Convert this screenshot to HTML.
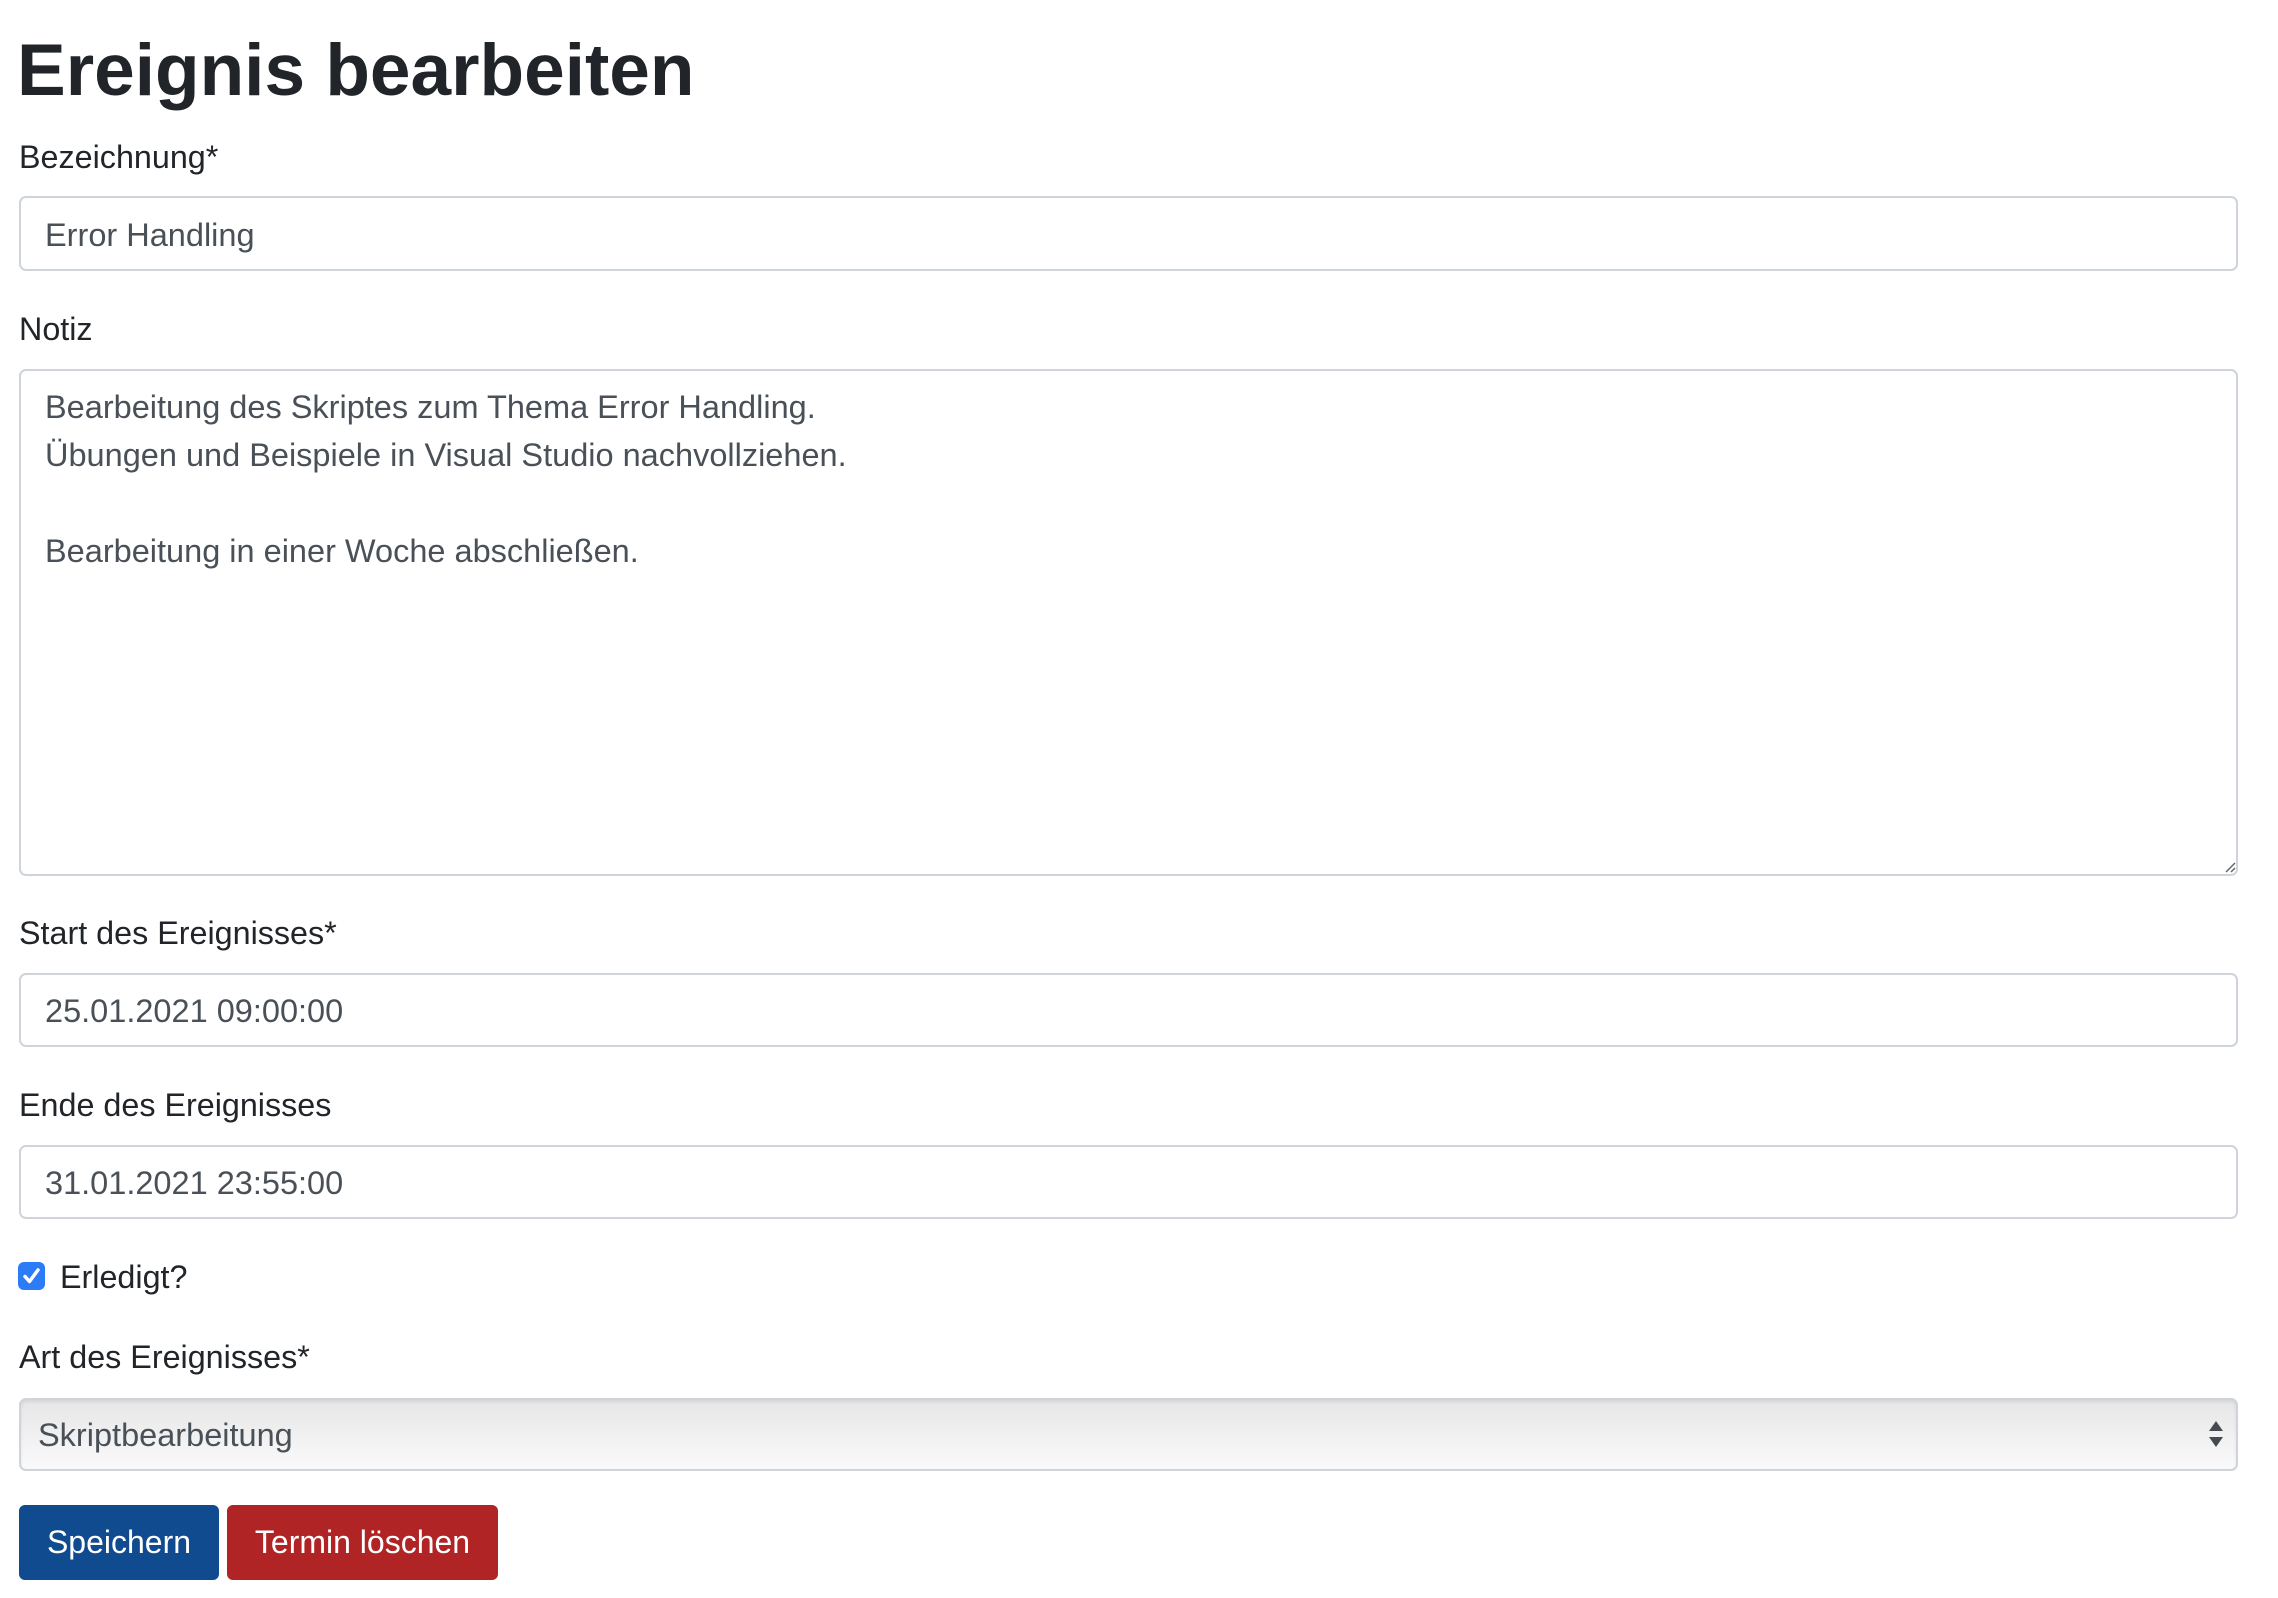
<!DOCTYPE html>
<html><head><meta charset="utf-8"><style>
html,body{margin:0;padding:0;background:#fff;width:2278px;height:1598px;overflow:hidden;font-family:"Liberation Sans",Arial,sans-serif;color:#212529}
.a{position:absolute;white-space:nowrap}
h1{position:absolute;left:17px;top:16px;margin:0;font-size:73px;font-weight:bold;line-height:110px;letter-spacing:0px}
.lbl{font-size:32.3px;line-height:40px}
.box{position:absolute;left:19px;width:2219px;border:2px solid #ced4da;border-radius:7px;box-sizing:border-box;background:#fff}
.txt{font-size:32.5px;color:#495057;line-height:40px}
.btn{position:absolute;top:1505px;height:75px;border-radius:6px;color:#fff;font-size:32px;line-height:75px;text-align:center}
</style></head><body>
<h1>Ereignis bearbeiten</h1>
<div class="a lbl" style="left:19px;top:137px">Bezeichnung*</div>
<div class="box" style="top:196px;height:75px"></div>
<div class="a txt" style="left:45px;top:215px">Error Handling</div>
<div class="a lbl" style="left:19px;top:309px">Notiz</div>
<div class="box" style="top:369px;height:507px"></div>
<div class="a txt" style="left:45px;top:383px;line-height:48px;white-space:pre">Bearbeitung des Skriptes zum Thema Error Handling.
Übungen und Beispiele in Visual Studio nachvollziehen.

Bearbeitung in einer Woche abschließen.</div>
<svg class="a" style="left:2224px;top:861px" width="12" height="12" viewBox="0 0 12 12"><path d="M2 11L11 2M7 11L11 7" stroke="#666" stroke-width="1.5"/></svg>
<div class="a lbl" style="left:19px;top:913px">Start des Ereignisses*</div>
<div class="box" style="top:973px;height:74px"></div>
<div class="a txt" style="left:45px;top:991px">25.01.2021 09:00:00</div>
<div class="a lbl" style="left:19px;top:1085px">Ende des Ereignisses</div>
<div class="box" style="top:1145px;height:74px"></div>
<div class="a txt" style="left:45px;top:1163px">31.01.2021 23:55:00</div>
<div class="a" style="left:18px;top:1262px;width:27px;height:28px;border-radius:6px;background:#2b7cf6"></div>
<svg class="a" style="left:18px;top:1262px" width="27" height="28" viewBox="0 0 27 28"><path d="M7 14.5L11.5 19.5L20 8" stroke="#fff" stroke-width="3.5" fill="none" stroke-linecap="round" stroke-linejoin="round"/></svg>
<div class="a lbl" style="left:60px;top:1257px">Erledigt?</div>
<div class="a lbl" style="left:19px;top:1337px">Art des Ereignisses*</div>
<div class="box" style="top:1398px;height:73px;background:linear-gradient(#e6e6e6,#fafafa);box-shadow:inset 0 2px 3px rgba(0,0,0,.08)"></div>
<div class="a txt" style="left:38px;top:1415px">Skriptbearbeitung</div>
<svg class="a" style="left:2207px;top:1417px" width="18" height="34" viewBox="0 0 18 34"><path d="M9 4L16 14H2Z M9 30L16 20H2Z" fill="#454a50"/></svg>
<div class="btn" style="left:19px;width:200px;background:#114b8f">Speichern</div>
<div class="btn" style="left:227px;width:271px;background:#b02426">Termin löschen</div>
</body></html>
